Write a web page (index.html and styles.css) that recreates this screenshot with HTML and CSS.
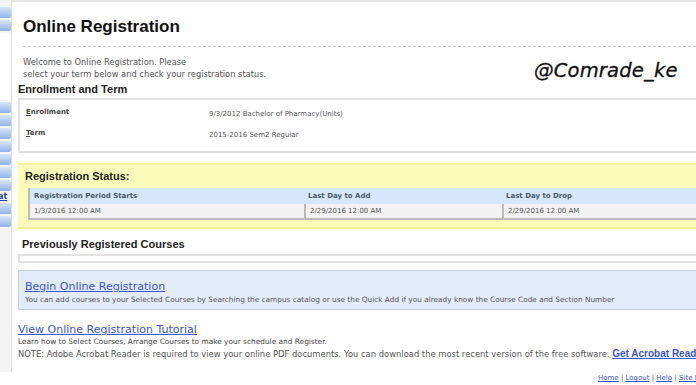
FILE: index.html
```html
<!DOCTYPE html>
<html lang="en">
<head>
    <meta charset="UTF-8">
    <title>Online Registration</title>
    <link rel="stylesheet" href="styles.css">
</head>
<body>
    <div class="page">
        <div class="sidebar">
            <span class="tab t1"></span>
            <span class="tab"></span>
            <span class="gap"></span>
            <span class="tab"></span>
            <span class="tab"></span>
            <span class="tab"></span>
            <span class="tab"></span>
            <span class="tab"></span>
            <span class="tab"></span>
            <span class="tab"></span>
            <a class="side-link" href="#">at</a>
            <span class="tab"></span>
            <span class="tab"></span>
        </div>

        <div class="main">
            <div class="header">
                <h1>Online Registration</h1>
                <p class="welcome">Welcome to Online Registration. Please<br>select your term below and check your registration status.</p>
            </div>
            <div class="watermark">@Comrade_ke</div>

            <h2>Enrollment and Term</h2>
            <div class="box term-box">
                <div class="term-row">
                    <span class="term-label"><u>E</u>nrollment</span>
                    <span class="term-value">9/3/2012 Bachelor of Pharmacy(Units)</span>
                </div>
                <div class="term-row">
                    <span class="term-label"><u>T</u>erm</span>
                    <span class="term-value">2015-2016 Sem2 Regular</span>
                </div>
            </div>

            <div class="status-box">
                <h2 class="status-title">Registration Status:</h2>
                <div class="status-table">
                    <div class="cell head c1">Registration Period Starts</div>
                    <div class="cell head c2">Last Day to Add</div>
                    <div class="cell head c3">Last Day to Drop</div>
                    <div class="cell data c1">1/3/2016 12:00 AM</div>
                    <div class="cell data c2">2/29/2016 12:00 AM</div>
                    <div class="cell data c3">2/29/2016 12:00 AM</div>
                </div>
            </div>

            <h2 class="prev-title">Previously Registered Courses</h2>
            <div class="box empty-box"></div>

            <div class="begin-box">
                <a class="big-link" href="#">Begin Online Registration</a>
                <p class="small">You can add courses to your Selected Courses by Searching the campus catalog or use the Quick Add if you already know the Course Code and Section Number</p>
            </div>

            <a class="big-link tutorial" href="#">View Online Registration Tutorial</a>
            <p class="small learn">Learn how to Select Courses, Arrange Courses to make your schedule and Register.</p>
            <p class="note">NOTE: Adobe Acrobat Reader is required to view your online PDF documents. You can download the most recent version of the free software. <a class="acrobat" href="#">Get Acrobat Reader</a></p>
        </div>
    </div>

    <div class="footer">
        <a href="#">Home</a> | <a href="#">Logout</a> | <a href="#">Help</a> | <a href="#">Site Map</a>
    </div>
</body>
</html>
```

FILE: styles.css
```css
body {
    margin: 0;
    font-family: "DejaVu Sans", Verdana, sans-serif;
    color: #555;
    background-color: #fff;
    overflow: hidden;
    width: 696px;
    height: 385px;
}

a {
    color: #3a55d0;
}

.page {
    display: flex;
    height: 372px;
}

.sidebar {
    width: 11px;
    flex-shrink: 0;
    background-color: #f4f4f4;
    display: flex;
    flex-direction: column;
    gap: 2px;
    padding-top: 7px;
}
.tab {
    display: block;
    height: 11px;
    background: linear-gradient(#d8e6fa, #8fb2ea);
    border-radius: 0 2px 2px 0;
}
.gap {
    height: 67px;
    background-color: #fff;
}
.side-link {
    font-size: 8px;
    font-weight: bold;
    line-height: 8px;
    height: 8px;
    color: #2a3fb0;
    margin-left: -2px;
}

.main {
    flex: 1;
    position: relative;
    border-left: 1px solid #ddd;
    border-top: 2px solid #e6e6e6;
    padding-left: 6px;
    min-width: 0;
    overflow: hidden;
}

.header {
    padding-left: 5px;
}
h1 {
    font-family: "Liberation Sans", Arial, sans-serif;
    font-size: 17px;
    color: #111;
    margin: 0;
    padding: 15px 0 9px;
    border-bottom: 1px dashed #ccc;
}
.welcome {
    font-size: 8.3px;
    line-height: 12px;
    margin: 9px 0 0;
}

.watermark {
    position: absolute;
    top: 57px;
    left: 522px;
    font-family: "DejaVu Sans", sans-serif;
    font-style: italic;
    font-size: 19.5px;
    color: #111;
    letter-spacing: 0.2px;
    -webkit-text-stroke: 0.3px #111;
}

h2 {
    font-family: "Liberation Sans", Arial, sans-serif;
    font-size: 11px;
    color: #222;
    margin: 3px 0 3px;
}

.box {
    border: 2px solid #e2e2e2;
    border-right: none;
}
.term-box {
    height: 55px;
    padding: 8px 0 0 6px;
    box-sizing: border-box;
}
.term-row {
    display: flex;
    height: 21px;
    font-size: 7px;
}
.term-label {
    width: 183px;
    font-weight: bold;
    color: #444;
}
.term-value {
    padding-top: 2px;
}

.status-box {
    margin-top: 10px;
    height: 66px;
    box-sizing: border-box;
    background-color: #fcfcba;
    border-top: 2px solid #f4f4a8;
    border-bottom: 2px solid #f0f0a0;
    padding: 5px 0 0 7px;
}
.status-title {
    margin: 0 0 6px;
}
.status-table {
    display: grid;
    grid-template-columns: 274px 198px 220px;
    margin-left: 3px;
    border-left: 2px solid #bbb;
    border-bottom: 2px solid #bbb;
    font-size: 7px;
}
.cell {
    padding-left: 4px;
}
.head {
    background-color: #d4e7fb;
    font-weight: bold;
    color: #4a5a6a;
    height: 16px;
    line-height: 16px;
}
.data {
    background-color: #f2f2f2;
    height: 14px;
    line-height: 14px;
}
.data.c2, .data.c3 {
    border-left: 2px solid #bbb;
}

.prev-title {
    margin: 9px 0 4px 4px;
}
.empty-box {
    height: 5px;
}

.begin-box {
    margin-top: 7px;
    height: 40px;
    box-sizing: border-box;
    background-color: #e2ecfb;
    border: 1px solid #c4cfdc;
    border-right: none;
    padding: 4px 0 0 6px;
}
.big-link {
    font-size: 11px;
    line-height: 14px;
}
.small {
    font-size: 7.35px;
    margin: 0;
    line-height: 12px;
}
.tutorial {
    display: inline-block;
    margin-top: 13px;
}
.learn {
    margin: 0;
    font-size: 7.4px;
    line-height: 9px;
    color: #444;
}
.note {
    font-size: 8.4px;
    margin: 2px 0 0;
    white-space: nowrap;
}
.acrobat {
    font-weight: bold;
    font-size: 10px;
    font-family: "Liberation Sans", Arial, sans-serif;
}

.footer {
    text-align: left;
    padding-left: 598px;
    font-size: 7px;
    line-height: 12px;
    white-space: nowrap;
    color: #555;
}
```
